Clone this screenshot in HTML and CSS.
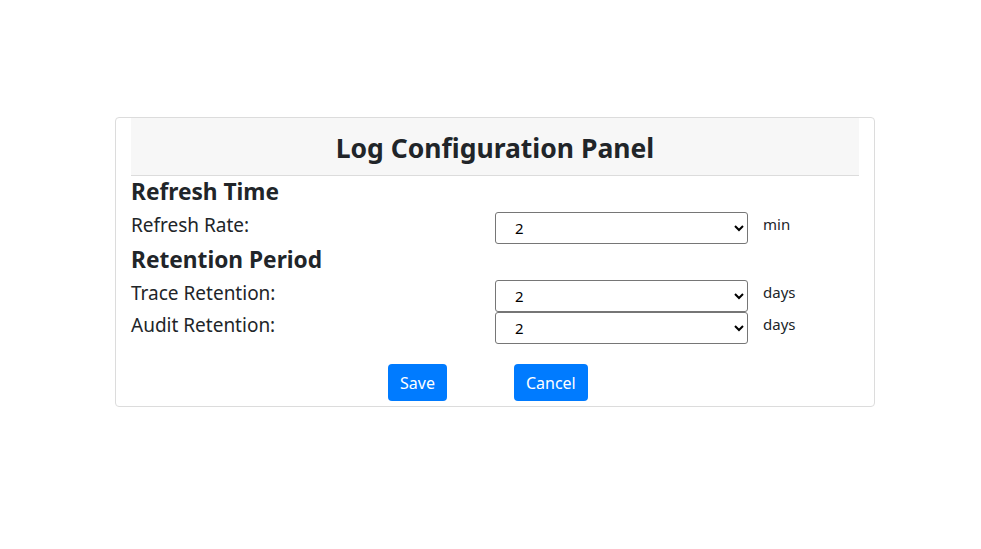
FILE: index.html
```html
<!DOCTYPE html>
<html>
<head>
<meta charset="utf-8">
<link rel="stylesheet" href="styles.css">
</head>
<body>
<div class="page">
  <div class="card">
    <div class="card-header"><h2 class="title">Log Configuration Panel</h2></div>
    <h3 class="section">Refresh Time</h3>
    <div class="row first">
      <label class="label">Refresh Rate:</label>
      <select class="select"><option>2</option></select>
      <span class="unit">min</span>
    </div>
    <h3 class="section">Retention Period</h3>
    <div class="row first">
      <label class="label">Trace Retention:</label>
      <select class="select"><option>2</option></select>
      <span class="unit">days</span>
    </div>
    <div class="row">
      <label class="label">Audit Retention:</label>
      <select class="select"><option>2</option></select>
      <span class="unit">days</span>
    </div>
    <div class="actions">
      <button class="btn">Save</button>
      <button class="btn">Cancel</button>
    </div>
  </div>
</div>
</body>
</html>
```
FILE: styles.css
```css
html, body { margin: 0; padding: 0; background: #fff; }
body { font-family: "Noto Sans", "Open Sans", sans-serif; color: #212529; }
.page { padding: 117px 0 0 115px; }
.card {
  width: 760px;
  height: 290px;
  box-sizing: border-box;
  border: 1px solid #dcdcdc;
  border-radius: 4px;
  padding: 0 15px;
}
.card-header {
  height: 58px;
  background: #f7f7f7;
  border-bottom: 1px solid #dcdcdc;
  display: flex;
  align-items: center;
  justify-content: center;
  box-sizing: border-box;
  padding-top: 2px;
}
.title { margin: 0; font-size: 26.5px; font-weight: 700; }
.section { margin: 0; font-size: 22.7px; font-weight: 700; line-height: 32px; }
.row { display: grid; grid-template-columns: 364px 253px auto; align-items: start; height: 32px; margin-top: 0; }
.row.first { margin-top: 4px; }
.label { font-size: 19px; line-height: 27px; }
.select {
  width: 253px; height: 32px;
  font-family: inherit; font-size: 15px;
  border: 1px solid #767676; border-radius: 3px;
  background: #fff; color: #000;
  padding: 0 0 0 15px;
}
.unit { font-size: 15px; line-height: 25px; margin-left: 15px; }
.actions { display: flex; gap: 67px; padding-left: 257px; margin-top: 20px; }
.btn {
  background: #007bff; color: #fff; border: 0; border-radius: 4px;
  font-family: inherit; font-size: 16px; height: 37px; padding: 0 12px;
}
```
